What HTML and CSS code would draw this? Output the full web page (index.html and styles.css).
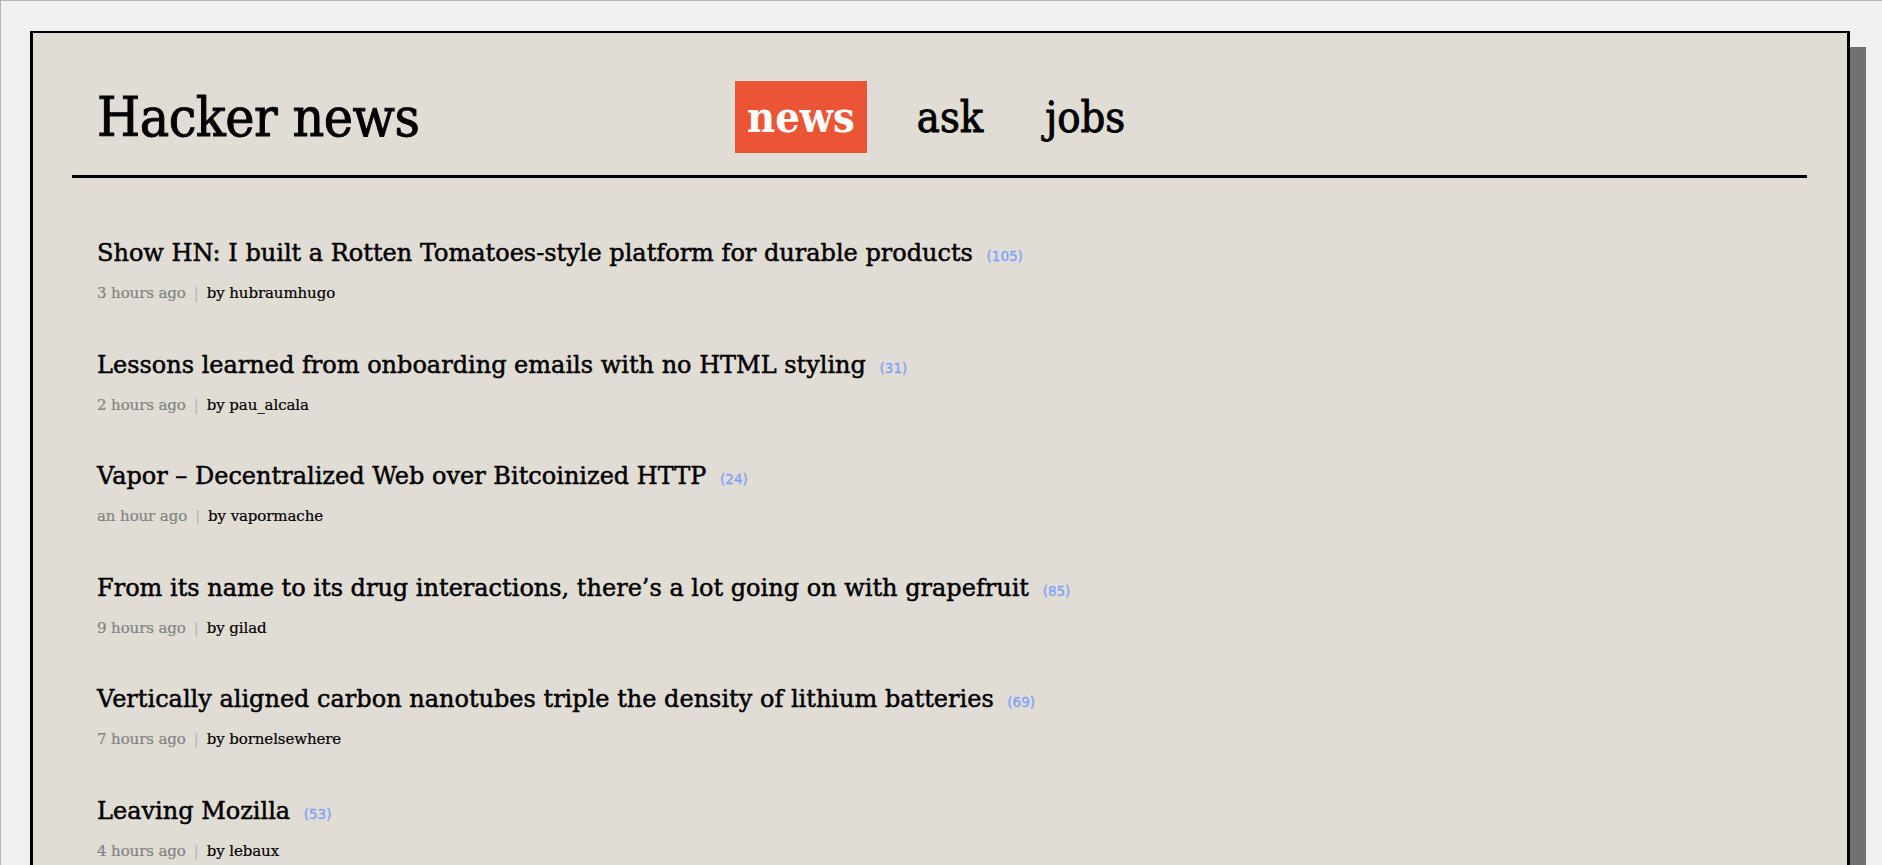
FILE: index.html
```html
<!DOCTYPE html>
<html>
<head>
<meta charset="utf-8">
<title>Hacker news</title>
<link rel="stylesheet" href="styles.css">
</head>
<body>
<div class="frame">
  <header class="header">
    <div class="logo">Hacker news</div>
    <nav class="nav">
      <a class="nav-link active">news</a>
      <a class="nav-link">ask</a>
      <a class="nav-link">jobs</a>
    </nav>
  </header>
  <ul class="list">
    <li class="item">
      <div class="title">Show HN: I built a Rotten Tomatoes-style platform for durable products <span class="count">(105)</span></div>
      <div class="meta"><span class="time">3 hours ago</span><span class="sep">|</span><span class="by">by hubraumhugo</span></div>
    </li>
    <li class="item">
      <div class="title">Lessons learned from onboarding emails with no HTML styling <span class="count">(31)</span></div>
      <div class="meta"><span class="time">2 hours ago</span><span class="sep">|</span><span class="by">by pau_alcala</span></div>
    </li>
    <li class="item">
      <div class="title">Vapor – Decentralized Web over Bitcoinized HTTP <span class="count">(24)</span></div>
      <div class="meta"><span class="time">an hour ago</span><span class="sep">|</span><span class="by">by vapormache</span></div>
    </li>
    <li class="item">
      <div class="title">From its name to its drug interactions, there’s a lot going on with grapefruit <span class="count">(85)</span></div>
      <div class="meta"><span class="time">9 hours ago</span><span class="sep">|</span><span class="by">by gilad</span></div>
    </li>
    <li class="item">
      <div class="title">Vertically aligned carbon nanotubes triple the density of lithium batteries <span class="count">(69)</span></div>
      <div class="meta"><span class="time">7 hours ago</span><span class="sep">|</span><span class="by">by bornelsewhere</span></div>
    </li>
    <li class="item">
      <div class="title">Leaving Mozilla <span class="count">(53)</span></div>
      <div class="meta"><span class="time">4 hours ago</span><span class="sep">|</span><span class="by">by lebaux</span></div>
    </li>
  </ul>
</div>
</body>
</html>
```
FILE: styles.css
```css
html {
  border-top: 1px solid #b4b4b4;
  border-left: 1px solid #b4b4b4;
  background: #f0f0f0;
}
body {
  margin: 0;
  padding: 30px 32px 0 29px;
  font-family: "DejaVu Serif", "Liberation Serif", serif;
  color: #000;
  overflow: hidden;
}
.frame {
  border: 3px solid #000;
  border-top-width: 2px;
  background: #e1ddd5;
  box-shadow: 16px 16px 0 #707070;
  min-height: 1000px;
}
.header {
  display: flex;
  align-items: center;
  margin: 0 40px 0 39px;
  padding: 48px 0 22px 25px;
  border-bottom: 3px solid #000;
  font-stretch: condensed;
}
.logo {
  flex: 0 0 638px;
  font-size: 55px;
  line-height: 60px;
  letter-spacing: -0.5px;
  -webkit-text-stroke: 0.9px #000;
}
.nav {
  display: flex;
  gap: 38px;
}
.nav-link {
  display: block;
  padding: 0 12px;
  height: 72px;
  line-height: 72px;
  font-size: 43px;
  color: #000;
  -webkit-text-stroke: 0.9px #000;
}
.nav-link.active {
  background: #ec5436;
  color: #fff;
  font-weight: bold;
  -webkit-text-stroke: 0;
}
.list {
  list-style: none;
  margin: 0 0 0 64px;
  padding: 59px 0 0;
}
.item {
  margin-bottom: 45.5px;
}
.title {
  font-size: 24px;
  line-height: 32px;
  margin-bottom: 11px;
  -webkit-text-stroke: 0.5px #000;
}
.count {
  font-family: "DejaVu Sans", sans-serif;
  font-size: 13.5px;
  font-weight: 500;
  color: #7ea2f5;
  margin-left: 6px;
  -webkit-text-stroke: 0.3px #7ea2f5;
}
.meta {
  font-size: 15px;
  line-height: 20px;
  letter-spacing: -0.1px;
}
.time {
  color: #828282;
  -webkit-text-stroke: 0.2px #828282;
}
.sep {
  color: #b8b4ad;
  margin: 0 8px;
}
.by {
  color: #000;
  -webkit-text-stroke: 0.2px #000;
}
```
